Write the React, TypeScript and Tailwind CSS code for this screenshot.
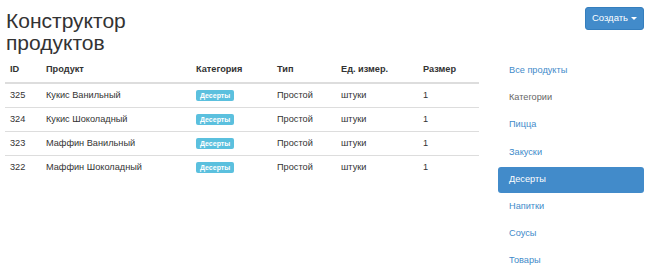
import * as React from "react";

const rows = [
  { id: 325, name: "Кукис Ванильный" },
  { id: 324, name: "Кукис Шоколадный" },
  { id: 323, name: "Маффин Ванильный" },
  { id: 322, name: "Маффин Шоколадный" },
];

const nav = [
  { label: "Все продукты", tone: "link" },
  { label: "Категории", tone: "muted" },
  { label: "Пицца", tone: "link" },
  { label: "Закуски", tone: "link" },
  { label: "Десерты", tone: "active" },
  { label: "Напитки", tone: "link" },
  { label: "Соусы", tone: "link" },
  { label: "Товары", tone: "link" },
];

export default function App() {
  return (
    <div
      className="w-[650px] bg-white px-[5px] text-[9.2px] text-[#333]"
      style={{ fontFamily: '"Liberation Sans", Arial, sans-serif' }}
    >
      {/* Шапка */}
      <div className="flex h-[58px] items-start justify-between pt-[7px]">
        <h1 className="ml-px mt-[3px] text-[21px] leading-[22px] font-normal text-[#333]">
          Конструктор
          <br />
          продуктов
        </h1>
        <button className="mr-[1px] inline-flex h-[23px] w-[59px] items-center justify-center gap-[3px] rounded-[3px] border border-[#357ebd] bg-[#428bca] text-[9.5px] text-white">
          Создать
          <span className="h-0 w-0 border-x-[3px] border-t-[3px] border-x-transparent border-t-white" />
        </button>
      </div>

      <div className="flex items-start justify-between">
        {/* Таблица */}
        <table className="w-[474px] border-collapse text-left">
          <thead>
            <tr className="border-b-2 border-[#ddd]">
              <th className="h-[25px] w-[36px] px-[5px] font-bold">ID</th>
              <th className="w-[150px] px-[5px] font-bold">Продукт</th>
              <th className="w-[81px] px-[5px] font-bold">Категория</th>
              <th className="w-[64px] px-[5px] font-bold">Тип</th>
              <th className="w-[82px] px-[5px] font-bold">Ед. измер.</th>
              <th className="px-[5px] font-bold">Размер</th>
            </tr>
          </thead>
          <tbody>
            {rows.map((r, i) => (
              <tr
                key={r.id}
                className={i < rows.length - 1 ? "border-b border-[#ddd]" : ""}
              >
                <td className="h-[24px] px-[5px] pt-px">{r.id}</td>
                <td className="px-[5px] pt-px">{r.name}</td>
                <td className="px-[5px] pt-px">
                  <span className="inline-block rounded-[2px] bg-[#5bc0de] px-[4px] py-[1px] align-middle text-[7px] leading-[9px] font-bold text-white">
                    Десерты
                  </span>
                </td>
                <td className="px-[5px] pt-px">Простой</td>
                <td className="px-[5px] pt-px">штуки</td>
                <td className="px-[5px] pt-px">1</td>
              </tr>
            ))}
          </tbody>
        </table>

        {/* Навигация */}
        <ul className="mr-px flex w-[146px] flex-col gap-[1.2px]">
          {nav.map((n) => (
            <li
              key={n.label}
              className={
                "flex h-[26px] items-center rounded-[3px] px-[11px] " +
                (n.tone === "active"
                  ? "bg-[#428bca] text-white"
                  : n.tone === "muted"
                  ? "text-[#666]"
                  : "text-[#428bca]")
              }
            >
              {n.label}
            </li>
          ))}
        </ul>
      </div>
    </div>
  );
}
